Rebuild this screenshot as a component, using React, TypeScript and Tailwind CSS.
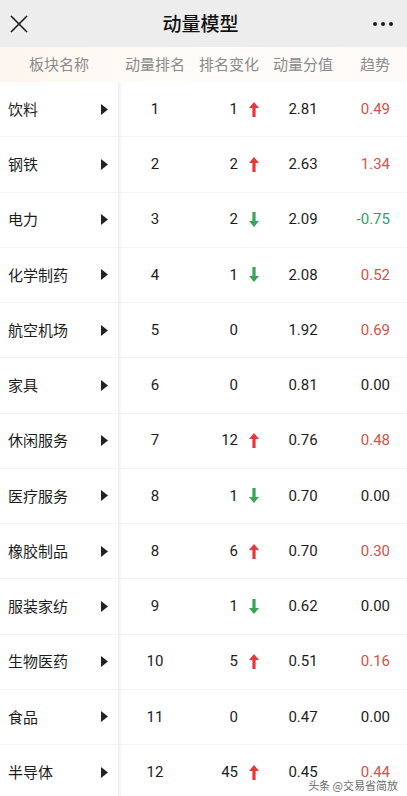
import React from "react";

type Row = { name: string; rank: number; change: number; dir: "up" | "down" | "none"; score: string; trend: string; tc: "red" | "green" | "black" };

const rows: Row[] = [
  { name: "饮料", rank: 1, change: 1, dir: "up", score: "2.81", trend: "0.49", tc: "red" },
  { name: "钢铁", rank: 2, change: 2, dir: "up", score: "2.63", trend: "1.34", tc: "red" },
  { name: "电力", rank: 3, change: 2, dir: "down", score: "2.09", trend: "-0.75", tc: "green" },
  { name: "化学制药", rank: 4, change: 1, dir: "down", score: "2.08", trend: "0.52", tc: "red" },
  { name: "航空机场", rank: 5, change: 0, dir: "none", score: "1.92", trend: "0.69", tc: "red" },
  { name: "家具", rank: 6, change: 0, dir: "none", score: "0.81", trend: "0.00", tc: "black" },
  { name: "休闲服务", rank: 7, change: 12, dir: "up", score: "0.76", trend: "0.48", tc: "red" },
  { name: "医疗服务", rank: 8, change: 1, dir: "down", score: "0.70", trend: "0.00", tc: "black" },
  { name: "橡胶制品", rank: 8, change: 6, dir: "up", score: "0.70", trend: "0.30", tc: "red" },
  { name: "服装家纺", rank: 9, change: 1, dir: "down", score: "0.62", trend: "0.00", tc: "black" },
  { name: "生物医药", rank: 10, change: 5, dir: "up", score: "0.51", trend: "0.16", tc: "red" },
  { name: "食品", rank: 11, change: 0, dir: "none", score: "0.47", trend: "0.00", tc: "black" },
  { name: "半导体", rank: 12, change: 45, dir: "up", score: "0.45", trend: "0.44", tc: "red" },
];

const UpArrow = () => (
  <svg width="10" height="15" viewBox="0 0 10 15">
    <path d="M5 0 L10 6 L6.6 6 L6.6 15 L3.4 15 L3.4 6 L0 6 Z" fill="#e8363a" />
  </svg>
);
const DownArrow = () => (
  <svg width="10" height="15" viewBox="0 0 10 15">
    <path d="M5 15 L10 9 L6.6 9 L6.6 0 L3.4 0 L3.4 9 L0 9 Z" fill="#3aa55a" />
  </svg>
);

const cjk = { fontFamily: '"Noto Sans CJK SC", "Noto Sans", sans-serif' };
const num = { fontFamily: 'Roboto, "Noto Sans CJK SC", sans-serif' };

export default function App() {
  return (
    <div className="w-[407px] h-[796px] overflow-hidden bg-white relative" style={cjk}>
      {/* top bar */}
      <div className="h-[47px] bg-[#ededed] flex items-center justify-between px-[10px]">
        <svg width="18" height="18" viewBox="0 0 18 18">
          <path d="M1 1 L17 17 M17 1 L1 17" stroke="#1a1a1a" strokeWidth="1.6" />
        </svg>
        <div className="text-[19px] font-medium text-[#111]">动量模型</div>
        <div className="flex gap-[4px] pr-[4px]">
          <span className="w-[4px] h-[4px] rounded-full bg-[#1a1a1a]" />
          <span className="w-[4px] h-[4px] rounded-full bg-[#1a1a1a]" />
          <span className="w-[4px] h-[4px] rounded-full bg-[#1a1a1a]" />
        </div>
      </div>
      {/* header row */}
      <div className="h-[35px] flex items-center text-[15px] text-[#8a8a8a] bg-gradient-to-r from-[#fdf6ef] via-[#fffcf9] to-[#fdfaf7]">
        <div className="w-[118px] text-center">板块名称</div>
        <div className="w-[74px] text-center">动量排名</div>
        <div className="w-[74px] text-center">排名变化</div>
        <div className="w-[74px] text-center">动量分值</div>
        <div className="flex-1 text-right pr-[17px]">趋势</div>
      </div>
      {/* rows */}
      <div className="relative">
        <div className="absolute left-[118px] top-0 bottom-0 w-[4px] bg-gradient-to-r from-[#ececec] to-transparent z-10" />
        {rows.map((r, i) => (
          <div key={i} className="h-[55.25px] flex items-center border-b border-[#f3f3f3] text-[15px] text-[#1c1c1c]">
            <div className="w-[118px] h-full flex items-center justify-between pl-[8px] pr-[10px]">
              <span style={cjk}>{r.name}</span>
              <svg width="7" height="11" viewBox="0 0 7 11">
                <path d="M0 0 L7 5.5 L0 11 Z" fill="#222" />
              </svg>
            </div>
            <div className="w-[74px] text-center" style={num}>{r.rank}</div>
            <div className="w-[74px] flex items-center" style={num}>
              <span className="w-[46px] text-right">{r.change}</span>
              <span className="ml-[11px] w-[10px] flex items-center">
                {r.dir === "up" ? <UpArrow /> : r.dir === "down" ? <DownArrow /> : null}
              </span>
            </div>
            <div className="w-[74px] text-center" style={num}>{r.score}</div>
            <div
              className={
                "flex-1 text-right pr-[17px] " +
                (r.tc === "red" ? "text-[#d5524a]" : r.tc === "green" ? "text-[#2f9e74]" : "text-[#1c1c1c]")
              }
              style={num}
            >
              {r.trend}
            </div>
          </div>
        ))}
      </div>
      <div className="absolute right-[9px] bottom-[4px] text-[11px] leading-[14px] text-[#6b6b6b] z-20">头条 @交易省简放</div>
    </div>
  );
}
